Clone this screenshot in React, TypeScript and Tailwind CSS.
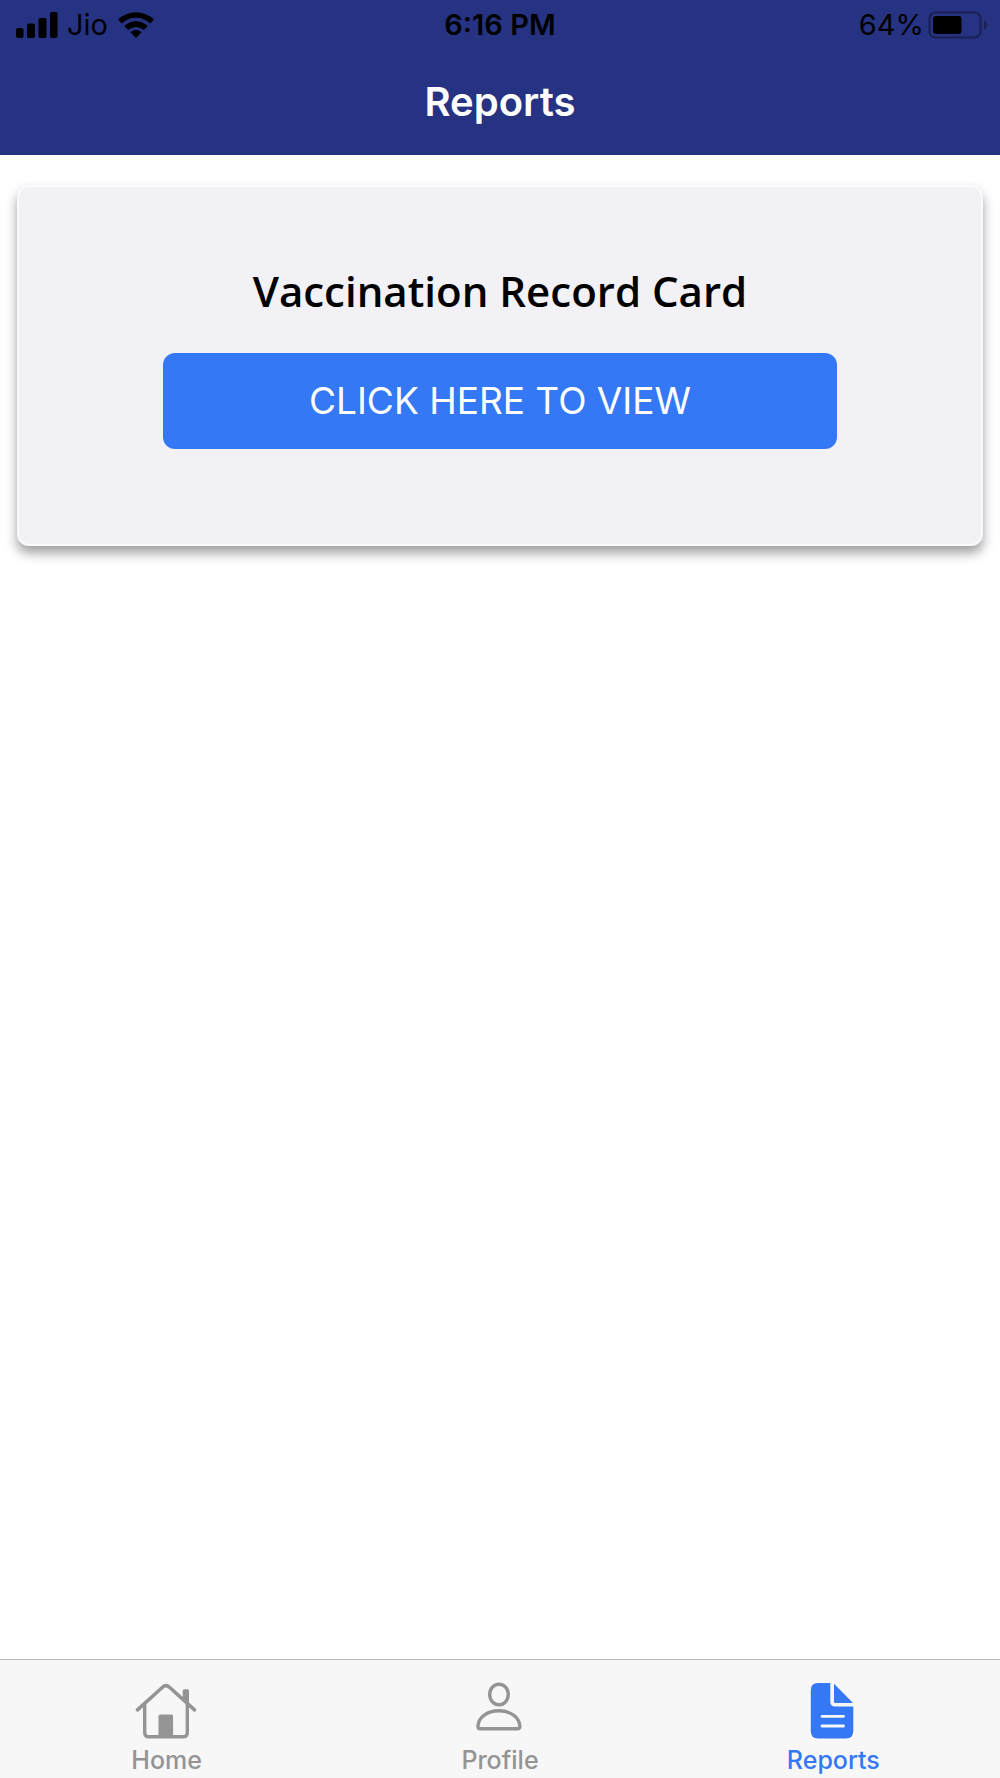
import { useState, type ReactNode } from 'react';
import clsx from 'clsx';

type TabKey = 'home' | 'profile' | 'reports';

function SignalIcon() {
  return (
    <svg width="42" height="28" viewBox="0 0 42 28" aria-hidden="true">
      <rect x="0" y="17" width="7.5" height="10" rx="2" />
      <rect x="11" y="12.5" width="8" height="14.5" rx="2" />
      <rect x="22.5" y="7" width="8" height="20" rx="2" />
      <rect x="34" y="1" width="7.5" height="26" rx="2" />
    </svg>
  );
}

function WifiIcon() {
  return (
    <svg width="38" height="28" viewBox="0 0 38 28" aria-hidden="true">
      <path d="M1 8.5a26 26 0 0 1 36 0l-3.8 4a20.5 20.5 0 0 0-28.4 0z" />
      <path d="M7.3 15a17 17 0 0 1 23.4 0l-3.9 4a11.5 11.5 0 0 0-15.6 0z" />
      <path d="M13.5 21.3a8 8 0 0 1 11 0L19 27z" />
    </svg>
  );
}

function BatteryIcon() {
  return (
    <svg width="60" height="28" viewBox="0 0 60 28" aria-hidden="true">
      <rect x="1.5" y="1.5" width="51" height="25" rx="6" fill="none" stroke="#1a2154" strokeWidth="2.2" />
      <rect x="5" y="5" width="28.5" height="18" rx="3" />
      <path d="M56 9.5c4 1.6 4 7.4 0 9z" fill="#1a2154" />
    </svg>
  );
}

function HomeIcon() {
  return (
    <svg width="64" height="60" viewBox="0 0 64 60" fill="none" stroke="currentColor" aria-hidden="true">
      <path d="M2.5 28.8 27.8 6q3.2-2.6 6.4 0l25.3 22.8" strokeWidth="3.6" strokeLinecap="round" />
      <path d="M9.7 23v28.5q0 4.3 4.3 4.3h34q4.3 0 4.3-4.3V23" strokeWidth="3.4" />
      <path d="M23.5 55V35q0-1.5 1.5-1.5h11.6q1.5 0 1.5 1.5v20z" fill="currentColor" stroke="none" />
      <path d="M47.7 19V9.8q0-1.5 1.5-1.5h3.3q1.5 0 1.5 1.5V25z" fill="currentColor" stroke="none" />
    </svg>
  );
}

function ProfileIcon() {
  return (
    <svg width="64" height="60" viewBox="0 0 64 60" fill="none" stroke="currentColor" strokeWidth="3.4" aria-hidden="true">
      <ellipse cx="31" cy="13.5" rx="9.3" ry="10.3" />
      <path d="M12.5 47.8q-2.6 0-2.6-2.8c.6-8.8 9.5-15.2 21-15.2s20.4 6.4 21 15.2q0 2.8-2.6 2.8z" />
    </svg>
  );
}

function ReportIcon() {
  return (
    <svg width="64" height="60" viewBox="0 0 64 60" aria-hidden="true">
      <path
        d="M17 2h12.3v18.5q0 5 5 5h18V50q0 7.5-7.5 7.5H17Q9.8 57.5 9.8 50V9.3Q9.8 2 17 2z"
        fill="currentColor"
      />
      <path d="M33 2.7 52 22H34.5q-1.5 0-1.5-1.5z" fill="currentColor" />
      <path d="M21 35.3h21.5M21 45h21.5" stroke="#f7f7f7" strokeWidth="2.8" strokeLinecap="round" />
    </svg>
  );
}

const TABS: { key: TabKey; label: string; icon: ReactNode }[] = [
  { key: 'home', label: 'Home', icon: <HomeIcon /> },
  { key: 'profile', label: 'Profile', icon: <ProfileIcon /> },
  { key: 'reports', label: 'Reports', icon: <ReportIcon /> },
];

function StatusBar() {
  return (
    <div className="grid h-[50px] grid-cols-3 items-center px-4 text-[29px] leading-[50px] text-black">
      <div className="flex items-center gap-[9px]">
        <SignalIcon />
        <span>Jio</span>
        <WifiIcon />
      </div>
      <span className="text-center font-semibold">6:16 PM</span>
      <div className="-mr-1 flex items-center justify-end gap-1">
        <span>64%</span>
        <BatteryIcon />
      </div>
    </div>
  );
}

export default function App() {
  const [tab, setTab] = useState<TabKey>('reports');

  return (
    <div className="flex min-h-screen flex-col bg-white font-['Inter',sans-serif]">
      <header className="bg-[#263383]">
        <StatusBar />
        <h1 className="h-[105px] text-center text-[40px] leading-[104px] font-semibold text-white">Reports</h1>
      </header>

      <main className="flex-1 px-[17px] pt-[30px]">
        <section className="rounded-[12px] border-2 border-[#fafafc] bg-[#f1f1f6] pt-[76px] pb-[95px] shadow-[0_7px_12px_rgba(0,0,0,0.38)]">
          <h2 className="text-center font-['Trebuchet_MS','Open_Sans',sans-serif] text-[42px] leading-[56px] font-semibold text-black">
            Vaccination Record Card
          </h2>
          <button
            type="button"
            className="mx-auto mt-[34px] block h-24 w-[70%] rounded-[12px] bg-[#3478f6] text-[37px] font-normal text-white"
          >
            CLICK HERE TO VIEW
          </button>
        </section>
      </main>

      {/* Bottom tab bar */}
      <nav className="grid grid-cols-3 border-t border-[#b9b9bb] bg-[#f7f7f7] pt-[21px] pb-1">
        {TABS.map(({ key, label, icon }) => (
          <button
            key={key}
            type="button"
            onClick={() => setTab(key)}
            aria-current={tab === key ? 'page' : undefined}
            className={clsx(
              'flex flex-col items-center gap-[5px] text-[25px] leading-7 font-medium',
              tab === key ? 'text-[#3478f6]' : 'text-[#949494]',
            )}
          >
            {icon}
            <span>{label}</span>
          </button>
        ))}
      </nav>
    </div>
  );
}
